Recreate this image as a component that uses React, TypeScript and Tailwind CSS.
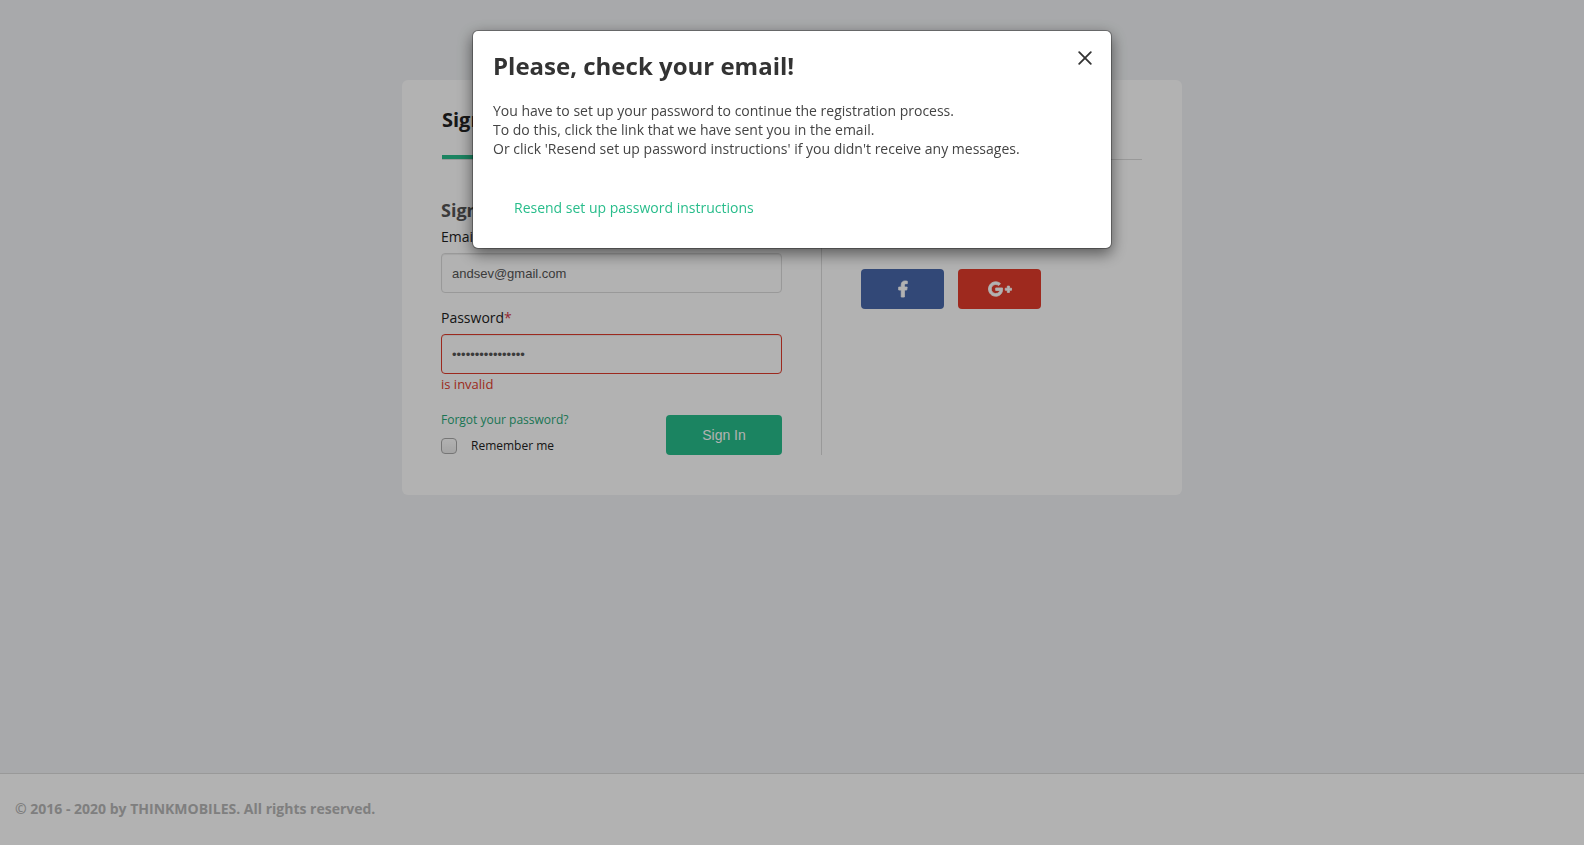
import { FaFacebookF, FaGooglePlusG } from "react-icons/fa";

function Modal() {
  return (
    <div className="fixed inset-0 flex items-start justify-center bg-black/30 px-4 pt-[30px]">
      <section
        role="dialog"
        aria-labelledby="dialog-title"
        className="relative w-full max-w-[640px] rounded-md border border-black/30 bg-white bg-clip-padding px-5 pt-5 pb-[29px] text-[#333] shadow-[0_5px_15px_rgba(0,0,0,0.5)]"
      >
        <h1 id="dialog-title" className="text-2xl leading-[30px] font-bold">
          Please, check your email!
        </h1>
        <button type="button" aria-label="Close" className="absolute top-5 right-[19px]">
          <svg width="14" height="14" viewBox="0 0 14 14" stroke="#333" strokeWidth="1.8" strokeLinecap="round" fill="none">
            <path d="M1.2 1.2l11.6 11.6M12.8 1.2L1.2 12.8" />
          </svg>
        </button>
        <p className="mt-5 text-sm leading-[19px] text-[#444]">
          You have to set up your password to continue the registration process.
          <br />
          To do this, click the link that we have sent you in the email.
          <br />
          Or click 'Resend set up password instructions' if you didn't receive any messages.
        </p>
        <button
          type="button"
          className="mt-[39px] ml-5 block border border-transparent text-sm leading-5 text-[#28bd8b]"
        >
          Resend set up password instructions
        </button>
      </section>
    </div>
  );
}

const field =
  "block h-10 w-full rounded border bg-white px-2.5 font-['Liberation_Sans',sans-serif] text-[13px] text-[#555] shadow-[inset_0_1px_1px_rgba(0,0,0,0.075)] outline-none";

function SignInForm() {
  return (
    <form className="w-full sm:w-[341px]" onSubmit={(e) => e.preventDefault()}>
      <h2 className="text-lg leading-6 font-bold text-[#555]">Sign In</h2>
      <label htmlFor="email" className="mt-[5px] mb-1.5 block leading-5">
        Email<span className="text-[#d23a4a]">*</span>
      </label>
      <input id="email" type="email" defaultValue="andsev@gmail.com" className={`${field} border-[#dcdcdc]`} />
      <label htmlFor="password" className="mt-[15px] mb-1.5 block leading-5">
        Password<span className="text-[#d23a4a]">*</span>
      </label>
      <input id="password" type="password" defaultValue="sixteenletterspw" className={`${field} border-[#e03c2c]`} />
      <p className="text-[13px] leading-5 text-[#e03c2c]">is invalid</p>
      <div className="mt-4 flex items-end justify-between">
        <div className="pb-px text-xs">
          <a href="#forgot" className="block leading-5 text-[#28a878]">
            Forgot your password?
          </a>
          <label className="mt-2 flex items-center gap-3.5 leading-4">
            <input
              type="checkbox"
              className="size-4 appearance-none rounded border border-[#aaa] bg-linear-to-b from-white to-[#ececec]"
            />
            Remember me
          </label>
        </div>
        <button
          type="submit"
          className="h-10 w-29 rounded bg-[#28bd8b] font-['Liberation_Sans',sans-serif] text-sm text-white"
        >
          Sign In
        </button>
      </div>
    </form>
  );
}

export default function App() {
  return (
    <div className="flex min-h-screen flex-col bg-[#f1f3f5] font-['Open_Sans',sans-serif] text-sm text-[#222]">
      <main className="grow px-4 pt-20 pb-10">
        <div className="mx-auto max-w-[780px] rounded-md bg-white pb-10">
          <nav className="mx-10 flex gap-10 border-b border-[#dcdcdc] pt-[26px] text-xl leading-7 font-bold">
            <a href="#signin" className="border-b-4 border-[#28bd8b] pb-[21px]">
              Sign In
            </a>
          </nav>
          <div className="mx-[39px] flex flex-wrap pt-[38px]">
            <SignInForm />
            <div className="ml-[39px] border-l border-[#dcdcdc] pl-[39px]">
              <h2 className="text-lg leading-6 font-bold text-[#555]">Sign In with</h2>
              <div className="mt-[47px] flex gap-3.5">
                <a
                  href="#facebook"
                  aria-label="Facebook"
                  className="flex h-10 w-[83px] items-center justify-center rounded bg-[#4868ab] text-white"
                >
                  <FaFacebookF size={16} strokeWidth={28} stroke="currentColor" overflow="visible" />
                </a>
                <a
                  href="#google"
                  aria-label="Google Plus"
                  className="flex h-10 w-[83px] items-center justify-center rounded bg-[#e23c2b] text-white"
                >
                  <FaGooglePlusG size={24} strokeWidth={22} stroke="currentColor" overflow="visible" />
                </a>
              </div>
            </div>
          </div>
        </div>
      </main>
      <footer className="border-t border-[#dcdcdc] bg-white px-[15px] pt-[25px] pb-[26px] text-sm leading-5 font-bold text-[#b6b6b6]">
        © 2016 - 2020 by THINKMOBILES. All rights reserved.
      </footer>
      <Modal />
    </div>
  );
}
